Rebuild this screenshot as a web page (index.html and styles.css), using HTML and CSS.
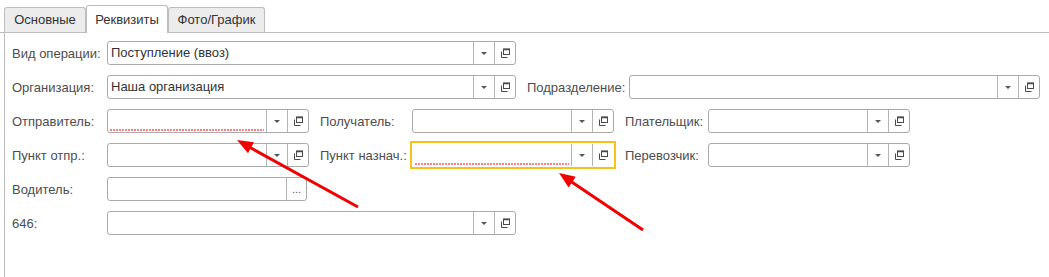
FILE: index.html
```html
<!DOCTYPE html>
<html lang="ru">
<head>
    <meta charset="UTF-8">
    <meta name="viewport" content="width=device-width, initial-scale=1.0">
    <title>Реквизиты</title>
    <link rel="stylesheet" href="styles.css">
</head>
<body>
    <div class="tabs">
        <div class="tab tab-main">Основные</div>
        <div class="tab tab-req active">Реквизиты</div>
        <div class="tab tab-photo">Фото/График</div>
    </div>

    <div class="panel">
        <div class="row">
            <label class="lbl lbl-1">Вид операции:</label>
            <div class="field wide">
                <span class="value">Поступление (ввоз)</span>
                <span class="btn drop"><i class="caret"></i></span>
                <span class="btn open"><svg width="11" height="11" viewBox="0 0 11 11"><path d="M1.5 3.5v6h6" fill="none" stroke="#4a4a4a"/><rect x="3.5" y="1" width="6" height="5.5" fill="none" stroke="#4a4a4a"/><path d="M3.5 1.5h6.5" stroke="#4a4a4a" stroke-width="1.5"/></svg></span>
            </div>
        </div>

        <div class="row">
            <label class="lbl lbl-1">Организация:</label>
            <div class="field wide">
                <span class="value">Наша организация</span>
                <span class="btn drop"><i class="caret"></i></span>
                <span class="btn open"><svg width="11" height="11" viewBox="0 0 11 11"><path d="M1.5 3.5v6h6" fill="none" stroke="#4a4a4a"/><rect x="3.5" y="1" width="6" height="5.5" fill="none" stroke="#4a4a4a"/><path d="M3.5 1.5h6.5" stroke="#4a4a4a" stroke-width="1.5"/></svg></span>
            </div>
            <label class="lbl lbl-sub">Подразделение:</label>
            <div class="field wider">
                <span class="value"></span>
                <span class="btn drop"><i class="caret"></i></span>
                <span class="btn open"><svg width="11" height="11" viewBox="0 0 11 11"><path d="M1.5 3.5v6h6" fill="none" stroke="#4a4a4a"/><rect x="3.5" y="1" width="6" height="5.5" fill="none" stroke="#4a4a4a"/><path d="M3.5 1.5h6.5" stroke="#4a4a4a" stroke-width="1.5"/></svg></span>
            </div>
        </div>

        <div class="row">
            <label class="lbl lbl-1">Отправитель:</label>
            <div class="field">
                <span class="value"><svg class="mark" height="2" preserveAspectRatio="none"><line x1="0" y1="1" x2="100%" y2="1" stroke="#ff0000" stroke-width="1.2" stroke-dasharray="2 1"/></svg></span>
                <span class="btn drop"><i class="caret"></i></span>
                <span class="btn open"><svg width="11" height="11" viewBox="0 0 11 11"><path d="M1.5 3.5v6h6" fill="none" stroke="#4a4a4a"/><rect x="3.5" y="1" width="6" height="5.5" fill="none" stroke="#4a4a4a"/><path d="M3.5 1.5h6.5" stroke="#4a4a4a" stroke-width="1.5"/></svg></span>
            </div>
            <label class="lbl lbl-2">Получатель:</label>
            <div class="field">
                <span class="value"></span>
                <span class="btn drop"><i class="caret"></i></span>
                <span class="btn open"><svg width="11" height="11" viewBox="0 0 11 11"><path d="M1.5 3.5v6h6" fill="none" stroke="#4a4a4a"/><rect x="3.5" y="1" width="6" height="5.5" fill="none" stroke="#4a4a4a"/><path d="M3.5 1.5h6.5" stroke="#4a4a4a" stroke-width="1.5"/></svg></span>
            </div>
            <label class="lbl lbl-3">Плательщик:</label>
            <div class="field">
                <span class="value"></span>
                <span class="btn drop"><i class="caret"></i></span>
                <span class="btn open"><svg width="11" height="11" viewBox="0 0 11 11"><path d="M1.5 3.5v6h6" fill="none" stroke="#4a4a4a"/><rect x="3.5" y="1" width="6" height="5.5" fill="none" stroke="#4a4a4a"/><path d="M3.5 1.5h6.5" stroke="#4a4a4a" stroke-width="1.5"/></svg></span>
            </div>
        </div>

        <div class="row">
            <label class="lbl lbl-1">Пункт отпр.:</label>
            <div class="field">
                <span class="value"></span>
                <span class="btn drop"><i class="caret"></i></span>
                <span class="btn open"><svg width="11" height="11" viewBox="0 0 11 11"><path d="M1.5 3.5v6h6" fill="none" stroke="#4a4a4a"/><rect x="3.5" y="1" width="6" height="5.5" fill="none" stroke="#4a4a4a"/><path d="M3.5 1.5h6.5" stroke="#4a4a4a" stroke-width="1.5"/></svg></span>
            </div>
            <label class="lbl lbl-2">Пункт назнач.:</label>
            <div class="field focused">
                <span class="value"><svg class="mark" height="2" preserveAspectRatio="none"><line x1="0" y1="1" x2="100%" y2="1" stroke="#ff0000" stroke-width="1.2" stroke-dasharray="2 1"/></svg></span>
                <span class="btn drop"><i class="caret"></i></span>
                <span class="btn open"><svg width="11" height="11" viewBox="0 0 11 11"><path d="M1.5 3.5v6h6" fill="none" stroke="#4a4a4a"/><rect x="3.5" y="1" width="6" height="5.5" fill="none" stroke="#4a4a4a"/><path d="M3.5 1.5h6.5" stroke="#4a4a4a" stroke-width="1.5"/></svg></span>
            </div>
            <label class="lbl lbl-3">Перевозчик:</label>
            <div class="field">
                <span class="value"></span>
                <span class="btn drop"><i class="caret"></i></span>
                <span class="btn open"><svg width="11" height="11" viewBox="0 0 11 11"><path d="M1.5 3.5v6h6" fill="none" stroke="#4a4a4a"/><rect x="3.5" y="1" width="6" height="5.5" fill="none" stroke="#4a4a4a"/><path d="M3.5 1.5h6.5" stroke="#4a4a4a" stroke-width="1.5"/></svg></span>
            </div>
        </div>

        <div class="row">
            <label class="lbl lbl-1">Водитель:</label>
            <div class="field short">
                <span class="value"></span>
                <span class="btn dots">...</span>
            </div>
        </div>

        <div class="row">
            <label class="lbl lbl-1">646:</label>
            <div class="field wide">
                <span class="value"></span>
                <span class="btn drop"><i class="caret"></i></span>
                <span class="btn open"><svg width="11" height="11" viewBox="0 0 11 11"><path d="M1.5 3.5v6h6" fill="none" stroke="#4a4a4a"/><rect x="3.5" y="1" width="6" height="5.5" fill="none" stroke="#4a4a4a"/><path d="M3.5 1.5h6.5" stroke="#4a4a4a" stroke-width="1.5"/></svg></span>
            </div>
        </div>
    </div>

    <!-- annotation arrows drawn over the form -->
    <svg class="arrows" width="1049" height="277" viewBox="0 0 1049 277">
        <line x1="358" y1="207" x2="250" y2="147.5" stroke="#f20000" stroke-width="3"/>
        <polygon points="237,140 254,142.3 248,153.2" fill="#f20000"/>
        <line x1="643" y1="230" x2="571" y2="181.5" stroke="#f20000" stroke-width="3"/>
        <polygon points="559,173 575.8,176.8 568.6,187.4" fill="#f20000"/>
    </svg>
</body>
</html>
```

FILE: styles.css
```css
body {
    margin: 0;
    font-family: "Liberation Sans", Arial, sans-serif;
    font-size: 13px;
    color: #333;
    background-color: #fff;
    height: 277px;
    overflow: hidden;
    position: relative;
}
.tabs {
    display: flex;
    align-items: flex-end;
    padding: 5px 0 0 4px;
    border-bottom: 1px solid #bdbdbd;
    height: 27px;
}
.tab {
    box-sizing: border-box;
    height: 25px;
    line-height: 24px;
    text-align: center;
    background-color: #ececec;
    border: 1px solid #bdbdbd;
    border-bottom: none;
    border-radius: 3px 3px 0 0;
    color: #333;
}
.tab-main { width: 82px; }
.tab-req { width: 82px; border-left: none; border-right: none; }
.tab-photo { width: 97px; }
.tab.active {
    height: 28px;
    line-height: 27px;
    background-color: #fff;
    margin-bottom: -1px;
    border: 1px solid #bdbdbd;
    border-bottom: none;
}
.panel {
    margin-left: 4px;
    border-left: 1px solid #bdbdbd;
    padding: 8px 0 0 7px;
    height: 236px;
    display: flex;
    flex-direction: column;
    gap: 10px;
}
.row {
    display: flex;
    align-items: center;
    height: 24px;
}
.lbl {
    color: #4d4d4d;
    white-space: nowrap;
}
.lbl-1 { width: 95px; }
.lbl-2 { width: 92px; margin-left: 11px; }
.lbl-3 { width: 83px; margin-left: 11px; }
.lbl-sub { width: 102px; margin-left: 11px; }
.field {
    box-sizing: border-box;
    width: 202px;
    height: 24px;
    display: flex;
    border: 1px solid #a9a9a9;
    border-radius: 3px;
    background-color: #fff;
}
.field.wide { width: 409px; }
.field.wider { width: 411px; }
.field.short { width: 200px; }
.field.focused {
    border-color: #fff;
    box-shadow: 0 0 0 2px #f5c21a;
    border-radius: 0;
}
.value {
    flex: 1;
    padding-left: 3px;
    line-height: 22px;
    color: #333;
    white-space: nowrap;
    overflow: hidden;
    display: flex;
    align-items: flex-end;
}
/* red dotted mark of an unfilled required field */
.mark {
    flex: 1;
    margin: 0 2px 1px -1px;
}
.btn {
    width: 20px;
    border-left: 1px solid #b4b4b4;
    display: flex;
    align-items: center;
    justify-content: center;
}
.caret {
    width: 0;
    height: 0;
    border-left: 3px solid transparent;
    border-right: 3px solid transparent;
    border-top: 3px solid #555;
    margin-top: 1px;
}
.dots {
    font-size: 11px;
    color: #555;
    align-items: flex-end;
    padding-bottom: 6px;
    box-sizing: border-box;
    line-height: 10px;
}
.arrows {
    position: absolute;
    left: 0;
    top: 0;
    pointer-events: none;
}
```
